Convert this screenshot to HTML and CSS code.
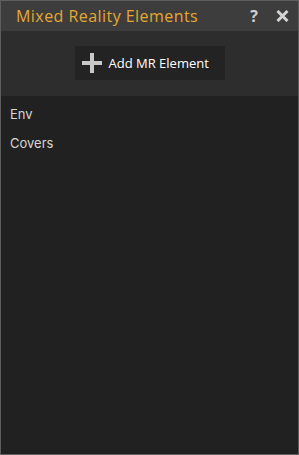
FILE: index.html
```html
<!DOCTYPE html>
<html>
<head>
<meta charset="utf-8">
<link rel="stylesheet" href="styles.css">
</head>
<body>
<div class="window">
  <div class="titlebar">
    <div class="title">Mixed Reality Elements</div>
    <div class="actions">
      <span class="help">?</span>
      <svg class="close" width="13" height="12" viewBox="0 0 13 12"><path d="M1.5 1 L11.5 11 M11.5 1 L1.5 11" stroke="#d4d4d4" stroke-width="3"/></svg>
    </div>
  </div>
  <div class="toolbar">
    <button class="add-btn">
      <svg class="plus" width="22" height="22" viewBox="0 0 22 22"><path d="M11 1 V21 M1 11 H21" stroke="#c8c8c8" stroke-width="4"/></svg>
      <span>Add MR Element</span>
    </button>
  </div>
  <div class="list">
    <div class="item">Env</div>
    <div class="item">Covers</div>
  </div>
</div>
</body>
</html>
```
FILE: styles.css
```css
html, body { margin: 0; padding: 0; background: #212121; }
.window {
  width: 299px; height: 455px; box-sizing: border-box;
  border: 1px solid #5e5e5e; display: flex; flex-direction: column;
  background: #212121;
}
.titlebar {
  height: 30px; background: #3d3d3d; display: flex; align-items: center;
  justify-content: space-between; padding: 0 9px 0 15px;
}
.title {
  font-family: "Open Sans", sans-serif; font-size: 16px; color: #e6a82e;
  letter-spacing: 0.45px;
}
.actions { display: flex; align-items: center; gap: 18px; }
.help {
  font-family: "Open Sans", sans-serif; font-weight: 700; font-size: 16px; color: #d0d0d0;
}
.close { display: block; }
.toolbar {
  height: 65px; background: #2d2d2d; display: flex; justify-content: center;
  align-items: flex-start; padding-top: 15px; box-sizing: border-box;
}
.add-btn {
  width: 150px; height: 34px; background: #232323; border: none;
  display: flex; align-items: center; gap: 6px; padding: 0 0 0 6px;
  color: #ffffff; font-family: "Open Sans", sans-serif; font-size: 13px;
}
.plus { display: block; }
.list { padding: 4px 0 0 9px; }
.item {
  font-family: "Inter", sans-serif; font-size: 13px; color: #d6d6d6;
  height: 29px; line-height: 29px;
}
```
